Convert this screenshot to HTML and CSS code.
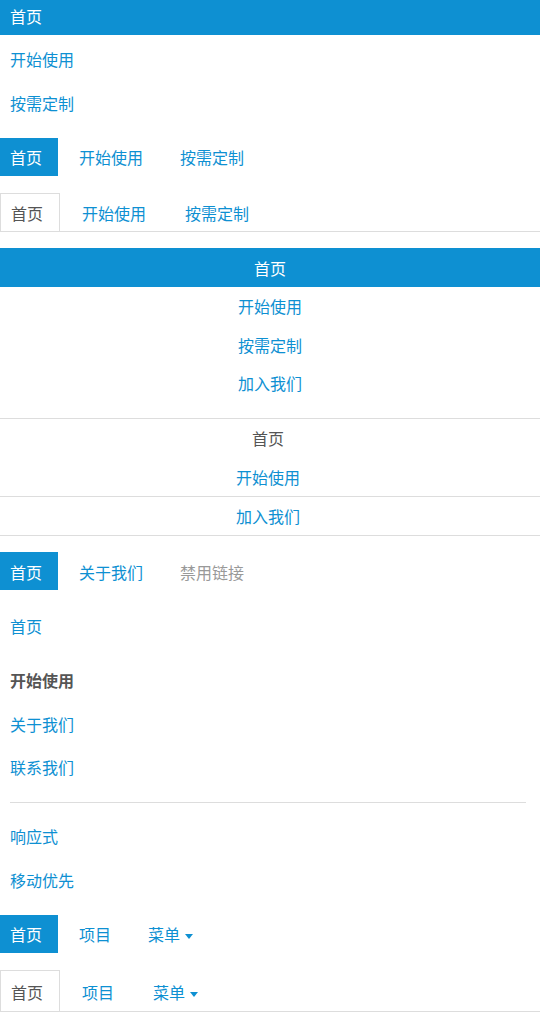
FILE: index.html
```html
<!DOCTYPE html>
<html lang="zh-CN">
<head>
<meta charset="utf-8">
<title>Nav</title>
<link rel="stylesheet" href="styles.css">
</head>
<body>
<ul class="nav nav-v nav-first">
  <li class="active"><a class="link" href="#">首页</a></li>
  <li><a class="link" href="#">开始使用</a></li>
  <li><a class="link" href="#">按需定制</a></li>
</ul>

<ul class="nav nav-h">
  <li class="active"><a class="link" href="#">首页</a></li>
  <li><a class="link" href="#">开始使用</a></li>
  <li><a class="link" href="#">按需定制</a></li>
</ul>

<ul class="nav nav-tabs">
  <li class="active"><a class="link" href="#">首页</a></li>
  <li><a class="link" href="#">开始使用</a></li>
  <li><a class="link" href="#">按需定制</a></li>
</ul>

<ul class="nav nav-justify">
  <li class="active"><a class="link" href="#">首页</a></li>
  <li><a class="link" href="#">开始使用</a></li>
  <li><a class="link" href="#">按需定制</a></li>
  <li><a class="link" href="#">加入我们</a></li>
</ul>

<ul class="nav nav-jtabs">
  <li class="current"><a class="link" href="#">首页</a></li>
  <li class="bordered"><a class="link" href="#">开始使用</a></li>
  <li class="bordered"><a class="link" href="#">加入我们</a></li>
</ul>

<ul class="nav nav-h">
  <li class="active"><a class="link" href="#">首页</a></li>
  <li><a class="link" href="#">关于我们</a></li>
  <li class="disabled"><a class="link" href="#">禁用链接</a></li>
</ul>

<ul class="nav nav-v">
  <li><a class="link" href="#">首页</a></li>
  <li class="header">开始使用</li>
  <li><a class="link" href="#">关于我们</a></li>
  <li><a class="link" href="#">联系我们</a></li>
  <li class="divider"></li>
  <li><a class="link" href="#">响应式</a></li>
  <li><a class="link" href="#">移动优先</a></li>
</ul>

<ul class="nav nav-h">
  <li class="active"><a class="link" href="#">首页</a></li>
  <li><a class="link" href="#">项目</a></li>
  <li><a class="link" href="#">菜单<span class="caret"></span></a></li>
</ul>

<ul class="nav nav-tabs nav-tabs-dd">
  <li class="active"><a class="link" href="#">首页</a></li>
  <li><a class="link" href="#">项目</a></li>
  <li><a class="link" href="#">菜单<span class="caret"></span></a></li>
</ul>
</body>
</html>
```

FILE: styles.css
```css
html, body {
  margin: 0;
  padding: 0;
  background: #fff;
}

body {
  font-family: "Noto Sans CJK SC", "Noto Sans", sans-serif;
  font-size: 16px;
  line-height: 25.6px;
  color: #333;
}

.nav {
  list-style: none;
  margin: 16px 0 0;
  padding: 0;
}

.nav-first {
  margin-top: -3.4px;
}

.link {
  display: block;
  padding: 7.4px 16px 5.4px 10px;
  color: #0e90d2;
  text-decoration: none;
}

.active > .link {
  background: #0e90d2;
  color: #fff;
}

.disabled > .link {
  color: #999;
}

/* vertical stacked */
.nav-v > li + li {
  margin-top: 5px;
}

.nav-v > li.header {
  margin-top: 16px;
  padding: 7.4px 16px 5.4px 10px;
  font-weight: bold;
  color: #555;
}

.nav-v > li.divider {
  height: 0;
  border-top: 1px solid #ddd;
  margin: 16px 14px 14px 10px;
}

/* horizontal pills */
.nav-h {
  display: flex;
  gap: 11px;
}

/* tabs */
.nav-tabs {
  display: flex;
  gap: 11px;
  padding-top: 1px;
  border-bottom: 1px solid #ddd;
}

.nav-tabs > li > .link {
  border: 1px solid transparent;
  border-bottom: 0;
  padding: 6.6px 16px 5.2px 10px;
}

.nav-tabs > li.active > .link {
  background: #fff;
  color: #555;
  border-color: #ddd;
}

.nav-tabs-dd > li > .link {
  padding-top: 9.2px;
}

/* justify */
.nav-justify .link {
  text-align: center;
  padding: 7.4px 0 5.4px;
}

.nav-jtabs {
  border-top: 1px solid #ddd;
}

.nav-jtabs .link {
  text-align: center;
  padding: 7.4px 4px 5.4px 0;
}

.nav-jtabs > li.current > .link {
  color: #555;
}

.nav-jtabs > li.bordered {
  border-bottom: 1px solid #ddd;
}

.caret {
  display: inline-block;
  width: 0;
  height: 0;
  margin-left: 5px;
  vertical-align: middle;
  border-top: 5px solid #0e90d2;
  border-left: 4.5px solid transparent;
  border-right: 4.5px solid transparent;
}
```
